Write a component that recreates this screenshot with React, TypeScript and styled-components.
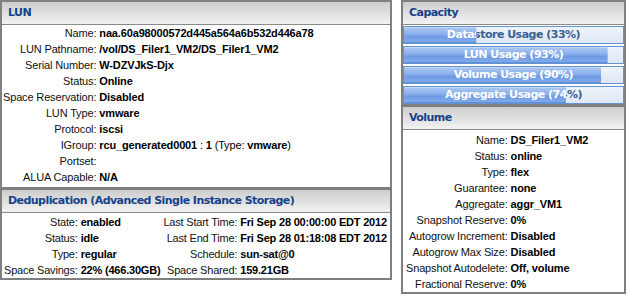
import React from "react";
import styled, { createGlobalStyle } from "styled-components";

const Global = createGlobalStyle`
  html, body { margin: 0; padding: 0; background: #fff; }
  body {
    font-family: "Liberation Sans", Arial, sans-serif;
    font-size: 11px;
    color: #000;
  }
`;

const Page = styled.div`
  display: flex;
  align-items: flex-start;
  gap: 9px;
  width: 626px;
`;

const Column = styled.div<{ $w: number }>`
  width: ${(p) => p.$w}px;
  display: flex;
  flex-direction: column;
`;

const Panel = styled.section<{ $bottom?: number }>`
  border: 2px solid #7f7f7f;
  border-bottom-width: ${(p) => p.$bottom ?? 2}px;
  box-sizing: border-box;
`;

const Header = styled.div`
  height: 22px;
  line-height: 22px;
  border-bottom: 1px solid #8a8a8a;
  background: linear-gradient(to bottom, #cdcdcd, #f2f2f2);
  padding-left: 6px;
  font-family: "DejaVu Sans", Verdana, sans-serif;
  font-weight: bold;
  font-size: 11px;
  letter-spacing: -0.55px;
  color: #15428b;
  white-space: nowrap;
`;

const KV = styled.div<{ $pad: string }>`
  display: grid;
  grid-template-columns: max-content 1fr;
  column-gap: 3px;
  grid-auto-rows: 16px;
  align-items: center;
  padding: ${(p) => p.$pad};
  letter-spacing: -0.15px;
`;

const Dedup = styled.div`
  display: grid;
  grid-template-columns: max-content max-content max-content 1fr;
  column-gap: 3px;
  grid-auto-rows: 16px;
  align-items: center;
  padding: 1px 0 0 2px;
  letter-spacing: -0.2px;
`;

const Label = styled.span`
  text-align: right;
  white-space: nowrap;
  color: #111;
`;

const Value = styled.span`
  font-weight: bold;
  white-space: nowrap;
`;

const Plain = styled.span`
  font-weight: normal;
`;

const Bars = styled.div`
  display: flex;
  flex-direction: column;
  gap: 2px;
  padding-top: 1px;
`;

const Bar = styled.div`
  position: relative;
  height: 18px;
  box-sizing: border-box;
  border: 1px solid #6593cf;
  background: linear-gradient(to bottom, #eef3fa, #dfe8f4);
`;

const BarText = styled.div`
  height: 16px;
  line-height: 16px;
  text-align: center;
  font-family: "DejaVu Sans", Verdana, sans-serif;
  font-weight: bold;
  font-size: 11px;
  letter-spacing: -0.5px;
  white-space: nowrap;
  color: #396095;
`;

const Fill = styled.div`
  position: absolute;
  inset: 0;
  box-sizing: border-box;
  border-top: 1px solid #c2d7f7;
  border-bottom: 1px solid #5f8fdc;
  background: linear-gradient(to bottom, #a9c6f2 0%, #88aeeb 45%, #6d9ae3 60%, #82aae9 100%);
  & > div {
    margin-top: -1px;
    color: #ffffff;
  }
`;

type Row = [string, React.ReactNode];

const lunRows: Row[] = [
  ["Name:", "naa.60a98000572d445a564a6b532d446a78"],
  ["LUN Pathname:", "/vol/DS_Filer1_VM2/DS_Filer1_VM2"],
  ["Serial Number:", "W-DZVJkS-Djx"],
  ["Status:", "Online"],
  ["Space Reservation:", "Disabled"],
  ["LUN Type:", "vmware"],
  ["Protocol:", "iscsi"],
  [
    "IGroup:",
    <>
      rcu_generated0001<Plain> : </Plain>1<Plain> (Type: </Plain>vmware<Plain>)</Plain>
    </>,
  ],
  ["Portset:", ""],
  ["ALUA Capable:", "N/A"],
];

const dedupRows: [string, string, string, string][] = [
  ["State:", "enabled", "Last Start Time:", "Fri Sep 28 00:00:00 EDT 2012"],
  ["Status:", "idle", "Last End Time:", "Fri Sep 28 01:18:08 EDT 2012"],
  ["Type:", "regular", "Schedule:", "sun-sat@0"],
  ["Space Savings:", "22% (466.30GB)", "Space Shared:", "159.21GB"],
];

const usage: [string, number][] = [
  ["Datastore Usage (33%)", 33],
  ["LUN Usage (93%)", 93],
  ["Volume Usage (90%)", 90],
  ["Aggregate Usage (74%)", 74],
];

const volumeRows: Row[] = [
  ["Name:", "DS_Filer1_VM2"],
  ["Status:", "online"],
  ["Type:", "flex"],
  ["Guarantee:", "none"],
  ["Aggregate:", "aggr_VM1"],
  ["Snapshot Reserve:", "0%"],
  ["Autogrow Increment:", "Disabled"],
  ["Autogrow Max Size:", "Disabled"],
  ["Snapshot Autodelete:", "Off, volume"],
  ["Fractional Reserve:", "0%"],
];

const KVList = ({ rows, pad }: { rows: Row[]; pad: string }) => (
  <KV $pad={pad}>
    {rows.map(([l, v]) => (
      <React.Fragment key={l}>
        <Label>{l}</Label>
        <Value>{v}</Value>
      </React.Fragment>
    ))}
  </KV>
);

export default function App() {
  return (
    <>
      <Global />
      <Page>
        <Column $w={392}>
          <Panel $bottom={1}>
            <Header>LUN</Header>
            <KVList rows={lunRows} pad="0 0 2px 1px" />
          </Panel>
          <Panel>
            <Header>Deduplication (Advanced Single Instance Storage)</Header>
            <Dedup>
              {dedupRows.map(([a, b, c, d]) => (
                <React.Fragment key={a}>
                  <Label>{a}</Label>
                  <Value>{b}</Value>
                  <Label>{c}</Label>
                  <Value>{d}</Value>
                </React.Fragment>
              ))}
            </Dedup>
          </Panel>
        </Column>
        <Column $w={225}>
          <Panel $bottom={1}>
            <Header>Capacity</Header>
            <Bars>
              {usage.map(([t, pct]) => (
                <Bar key={t}>
                  <BarText>{t}</BarText>
                  <Fill style={{ clipPath: `inset(0 ${100 - pct}% 0 0)` }}>
                    <BarText>{t}</BarText>
                  </Fill>
                </Bar>
              ))}
            </Bars>
          </Panel>
          <Panel>
            <Header>Volume</Header>
            <KVList rows={volumeRows} pad="2px 0 0 3px" />
          </Panel>
        </Column>
      </Page>
    </>
  );
}
